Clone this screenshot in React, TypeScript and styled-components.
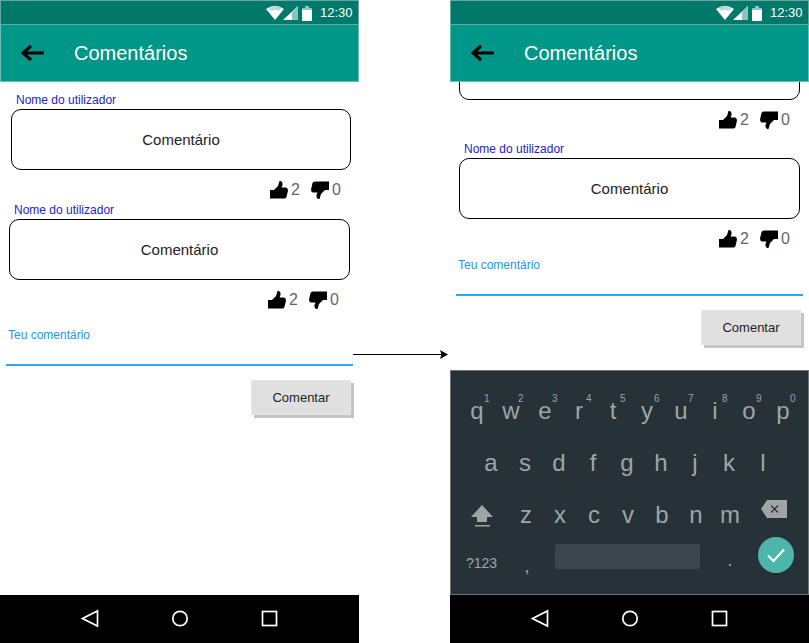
import { type FC } from "react";
import { createGlobalStyle, styled } from "styled-components";

const GlobalStyle = createGlobalStyle`
  html, body {
    margin: 0;
    padding: 0;
    background: #fff;
    font-family: "Liberation Sans", Arial, sans-serif;
  }
`;

const Page = styled.div`
  display: flex;
  width: 809px;
  height: 643px;
  overflow: hidden;
`;

const Phone = styled.section`
  width: 359px;
  height: 643px;
  display: flex;
  flex-direction: column;
  flex-shrink: 0;
`;

const StatusBar = styled.div`
  height: 25px;
  box-sizing: border-box;
  background: #00796b;
  border: 1px solid #6aa8a0;
  display: flex;
  align-items: center;
  justify-content: flex-end;
  color: #fff;
  font-size: 13px;
`;

const StatusIcons = styled.svg`
  width: 47px;
  height: 16px;
  margin-right: 7px;
`;

const Clock = styled.span`
  width: 33px;
  margin-right: 5px;
`;

const AppBar = styled.header`
  height: 57px;
  box-sizing: border-box;
  background: #009688;
  border: 1px solid #66c0b8;
  border-top: 0;
  display: flex;
  align-items: center;
  color: #fff;
  font-size: 20px;
`;

const BackIcon = styled.svg`
  width: 26px;
  height: 20px;
  margin-left: 19px;
  margin-right: 28px;
  margin-top: -1px;
`;

const Content = styled.main<{ $scrolled?: boolean }>`
  flex: 1;
  min-height: 0;
  overflow: hidden;
  display: flex;
  flex-direction: column;
  justify-content: ${(p) => (p.$scrolled ? "flex-end" : "flex-start")};
  padding-top: ${(p) => (p.$scrolled ? 0 : 11)}px;
  padding-bottom: ${(p) => (p.$scrolled ? 25 : 0)}px;
`;

const Comment = styled.article<{ $indent: number; $width: number; $gap: number }>`
  flex-shrink: 0;
  width: ${(p) => p.$width}px;
  margin-left: ${(p) => p.$indent}px;
  margin-bottom: ${(p) => p.$gap}px;
`;

const Author = styled.div`
  height: 16px;
  margin-left: 5px;
  color: #2222cc;
  font-size: 12px;
  line-height: 14px;
`;

const Bubble = styled.div`
  height: 61px;
  box-sizing: border-box;
  border: 1px solid #000;
  border-radius: 10px;
  display: flex;
  align-items: center;
  justify-content: center;
  color: #222;
  font-size: 15px;
`;

const Votes = styled.div<{ $inset: number }>`
  height: 33px;
  box-sizing: border-box;
  padding-top: 7px;
  padding-right: ${(p) => p.$inset}px;
  display: flex;
  align-items: center;
  justify-content: flex-end;
  color: #666;
  font-size: 16px;
  gap: 3px;
`;

const VoteIcon = styled.svg<{ $down?: boolean }>`
  width: 18px;
  height: 18px;
  transform: ${(p) => (p.$down ? "rotate(180deg)" : "none")};
`;

const VoteCount = styled.span`
  width: 9px;
  margin-right: 8px;

  &:last-child {
    margin-right: 0;
  }
`;

const Field = styled.div<{ $gap: number }>`
  flex-shrink: 0;
  margin-top: ${(p) => p.$gap}px;
  margin-left: 6px;
  width: 347px;
  height: 38px;
  box-sizing: border-box;
  border-bottom: 2px solid #2ea6ff;
  padding-left: 2px;
  color: #2196f3;
  font-size: 12px;
  line-height: 14px;
`;

const Actions = styled.div`
  flex-shrink: 0;
  display: flex;
  justify-content: flex-end;
  padding-right: 8px;
  margin-top: 14px;
`;

const SubmitButton = styled.button`
  width: 100px;
  height: 35px;
  border: 1px solid #e6e6e6;
  background: #e0e0e0;
  box-shadow: 3px 3px 0 #c4c4c4;
  color: #222;
  font-family: inherit;
  font-size: 13px;
  padding: 0;
`;

const NavBar = styled.nav`
  height: 48px;
  flex-shrink: 0;
  background: #000;
  display: flex;
  align-items: center;
  justify-content: center;
`;

const NavIcons = styled.svg`
  width: 200px;
  height: 20px;
`;

const Connector = styled.div`
  width: 91px;
  flex-shrink: 0;
  position: relative;
`;

const ArrowSvg = styled.svg`
  position: absolute;
  top: 346px;
  left: -6px;
  width: 96px;
  height: 16px;
`;

const Keyboard = styled.div`
  height: 225px;
  flex-shrink: 0;
  box-sizing: border-box;
  background: #263238;
  border: 1px solid #6c7679;
  padding-top: 14px;
  color: #a0a4a6;
`;

const KeyRow = styled.div<{ $inset: number }>`
  height: 52px;
  display: flex;
  align-items: center;
  padding-left: ${(p) => p.$inset}px;
`;

const Key = styled.span`
  position: relative;
  width: 34px;
  text-align: center;
  font-size: 24px;
  line-height: 28px;
`;

const KeyHint = styled.sup`
  position: absolute;
  top: -3px;
  left: 24px;
  font-size: 10px;
  line-height: 10px;
  color: #9aa0a2;
`;

const ShiftIcon = styled.svg`
  width: 34px;
  height: 26px;
  margin-right: 10px;
  flex-shrink: 0;
`;

const DeleteIcon = styled.svg`
  width: 34px;
  height: 26px;
  margin-left: 10px;
  margin-top: -12px;
  flex-shrink: 0;
`;

const BottomRow = styled.div`
  height: 52px;
  display: flex;
  align-items: center;
`;

const SymbolsKey = styled.span`
  width: 44px;
  margin-left: 15px;
  margin-top: -8px;
  font-size: 14px;
`;

const CommaKey = styled.span`
  width: 34px;
  text-align: center;
  font-size: 18px;
  margin-top: -1px;
`;

const SpaceBar = styled.div`
  width: 145px;
  height: 25px;
  border-radius: 3px;
  background: #3c474d;
  margin-left: 11px;
  margin-top: -21px;
`;

const PeriodKey = styled.span`
  width: 40px;
  margin-left: 10px;
  text-align: center;
  font-size: 18px;
  margin-top: -13px;
`;

const DoneKey = styled.div`
  width: 36px;
  height: 36px;
  border-radius: 50%;
  background: #4db6ac;
  display: flex;
  align-items: center;
  justify-content: center;
  margin-left: 8px;
  margin-top: -24px;

  & svg {
    width: 20px;
    height: 16px;
  }
`;

const Status: FC = () => (
  <StatusBar>
    <StatusIcons viewBox="0 0 47 16">
      <path d="M0 4 Q9 -2 18 4 L9 15 Z" fill="#fff" />
      <path d="M2.5 2.5 Q9 -1 15.5 2.5 L13 6 Q9 4 5 6 Z" fill="#b9dcd8" />
      <path d="M17 15 L32 15 L32 1 Z" fill="#fff" />
      <path d="M26 7 L32 1 V15 H26 Z" fill="#8dc4bd" />
      <path d="M36 3 H39 V1 H43 V3 H46 V16 H36 Z" fill="#fff" />
      <path d="M36 3 H39 V1 H43 V3 H46 V5 H36 Z" fill="#8dc4bd" />
    </StatusIcons>
    <Clock>12:30</Clock>
  </StatusBar>
);

const Header: FC = () => (
  <AppBar>
    <BackIcon viewBox="0 0 26 20">
      <path
        d="M24 10 H4 M11 3 L3 10 L11 17"
        fill="none"
        stroke="#000"
        strokeWidth="3"
      />
    </BackIcon>
    Comentários
  </AppBar>
);

const Navigation: FC = () => (
  <NavBar>
    <NavIcons viewBox="0 0 200 20">
      <path
        d="M17.5 2 L17.5 17 L2.5 9.5 Z"
        fill="none"
        stroke="#fff"
        strokeWidth="1.7"
      />
      <circle
        cx="100"
        cy="9.5"
        r="7.2"
        fill="none"
        stroke="#fff"
        strokeWidth="1.7"
      />
      <rect
        x="182.5"
        y="2.5"
        width="14"
        height="14"
        fill="none"
        stroke="#fff"
        strokeWidth="1.7"
      />
    </NavIcons>
  </NavBar>
);

const Thumb: FC<{ down?: boolean }> = ({ down }) => (
  <VoteIcon $down={down} viewBox="0 0 18 18">
    <path
      d="M0 9 H4 L8 5 L9.5 0 Q13 -0.5 12.5 4 L11.5 6.5 H16 Q18 7 18 9.5 L16.5 16 Q16 17.5 14 17.5 H0 Z"
      fill="#000"
    />
  </VoteIcon>
);

type CommentCardProps = {
  indent: number;
  width: number;
  gap: number;
  votesInset: number;
};

const CommentCard: FC<CommentCardProps> = ({
  indent,
  width,
  gap,
  votesInset,
}) => (
  <Comment $indent={indent} $width={width} $gap={gap}>
    <Author>Nome do utilizador</Author>
    <Bubble>Comentário</Bubble>
    <Votes $inset={votesInset}>
      <Thumb />
      <VoteCount>2</VoteCount>
      <Thumb down />
      <VoteCount>0</VoteCount>
    </Votes>
  </Comment>
);

const topRow = "qwertyuiop".split("");
const midRow = "asdfghjkl".split("");
const lowRow = "zxcvbnm".split("");

const SoftKeyboard: FC = () => (
  <Keyboard>
    <KeyRow $inset={9}>
      {topRow.map((key, i) => (
        <Key key={key}>
          {key}
          <KeyHint>{(i + 1) % 10}</KeyHint>
        </Key>
      ))}
    </KeyRow>
    <KeyRow $inset={23}>
      {midRow.map((key) => (
        <Key key={key}>{key}</Key>
      ))}
    </KeyRow>
    <KeyRow $inset={14}>
      <ShiftIcon viewBox="0 0 34 26">
        <path d="M17 3 L28 15 H22 V20 H12 V15 H6 Z" fill="#a0a4a6" />
        <rect x="10" y="23" width="15" height="1.5" fill="#a0a4a6" />
      </ShiftIcon>
      {lowRow.map((key) => (
        <Key key={key}>{key}</Key>
      ))}
      <DeleteIcon viewBox="0 0 34 26">
        <path d="M10 4 H30 V22 H10 L4 13 Z" fill="#a0a4a6" />
        <path
          d="M14 9.5 L21 16.5 M21 9.5 L14 16.5"
          stroke="#263238"
          strokeWidth="1.2"
        />
      </DeleteIcon>
    </KeyRow>
    <BottomRow>
      <SymbolsKey>?123</SymbolsKey>
      <CommaKey>,</CommaKey>
      <SpaceBar />
      <PeriodKey>.</PeriodKey>
      <DoneKey>
        <svg viewBox="0 0 20 16">
          <path
            d="M2 8.5 L7.5 14 L18 2.5"
            fill="none"
            stroke="#fff"
            strokeWidth="2"
          />
        </svg>
      </DoneKey>
    </BottomRow>
  </Keyboard>
);

const App: FC = () => (
  <Page>
    <GlobalStyle />
    <Phone>
      <Status />
      <Header />
      <Content>
        <CommentCard indent={11} width={340} gap={0} votesInset={10} />
        <CommentCard indent={9} width={341} gap={0} votesInset={11} />
        <Field $gap={15}>Teu comentário</Field>
        <Actions>
          <SubmitButton>Comentar</SubmitButton>
        </Actions>
      </Content>
      <Navigation />
    </Phone>
    <Connector>
      <ArrowSvg viewBox="0 0 96 16">
        <path d="M0 8.5 H90" stroke="#000" strokeWidth="1" />
        <path d="M95 8.5 L87 4 L88.5 8.5 L87 13 Z" fill="#000" />
      </ArrowSvg>
    </Connector>
    <Phone>
      <Status />
      <Header />
      <Content $scrolled>
        <CommentCard indent={9} width={341} gap={9} votesInset={10} />
        <CommentCard indent={9} width={341} gap={0} votesInset={10} />
        <Field $gap={6}>Teu comentário</Field>
        <Actions>
          <SubmitButton>Comentar</SubmitButton>
        </Actions>
      </Content>
      <SoftKeyboard />
      <Navigation />
    </Phone>
  </Page>
);

export default App;
